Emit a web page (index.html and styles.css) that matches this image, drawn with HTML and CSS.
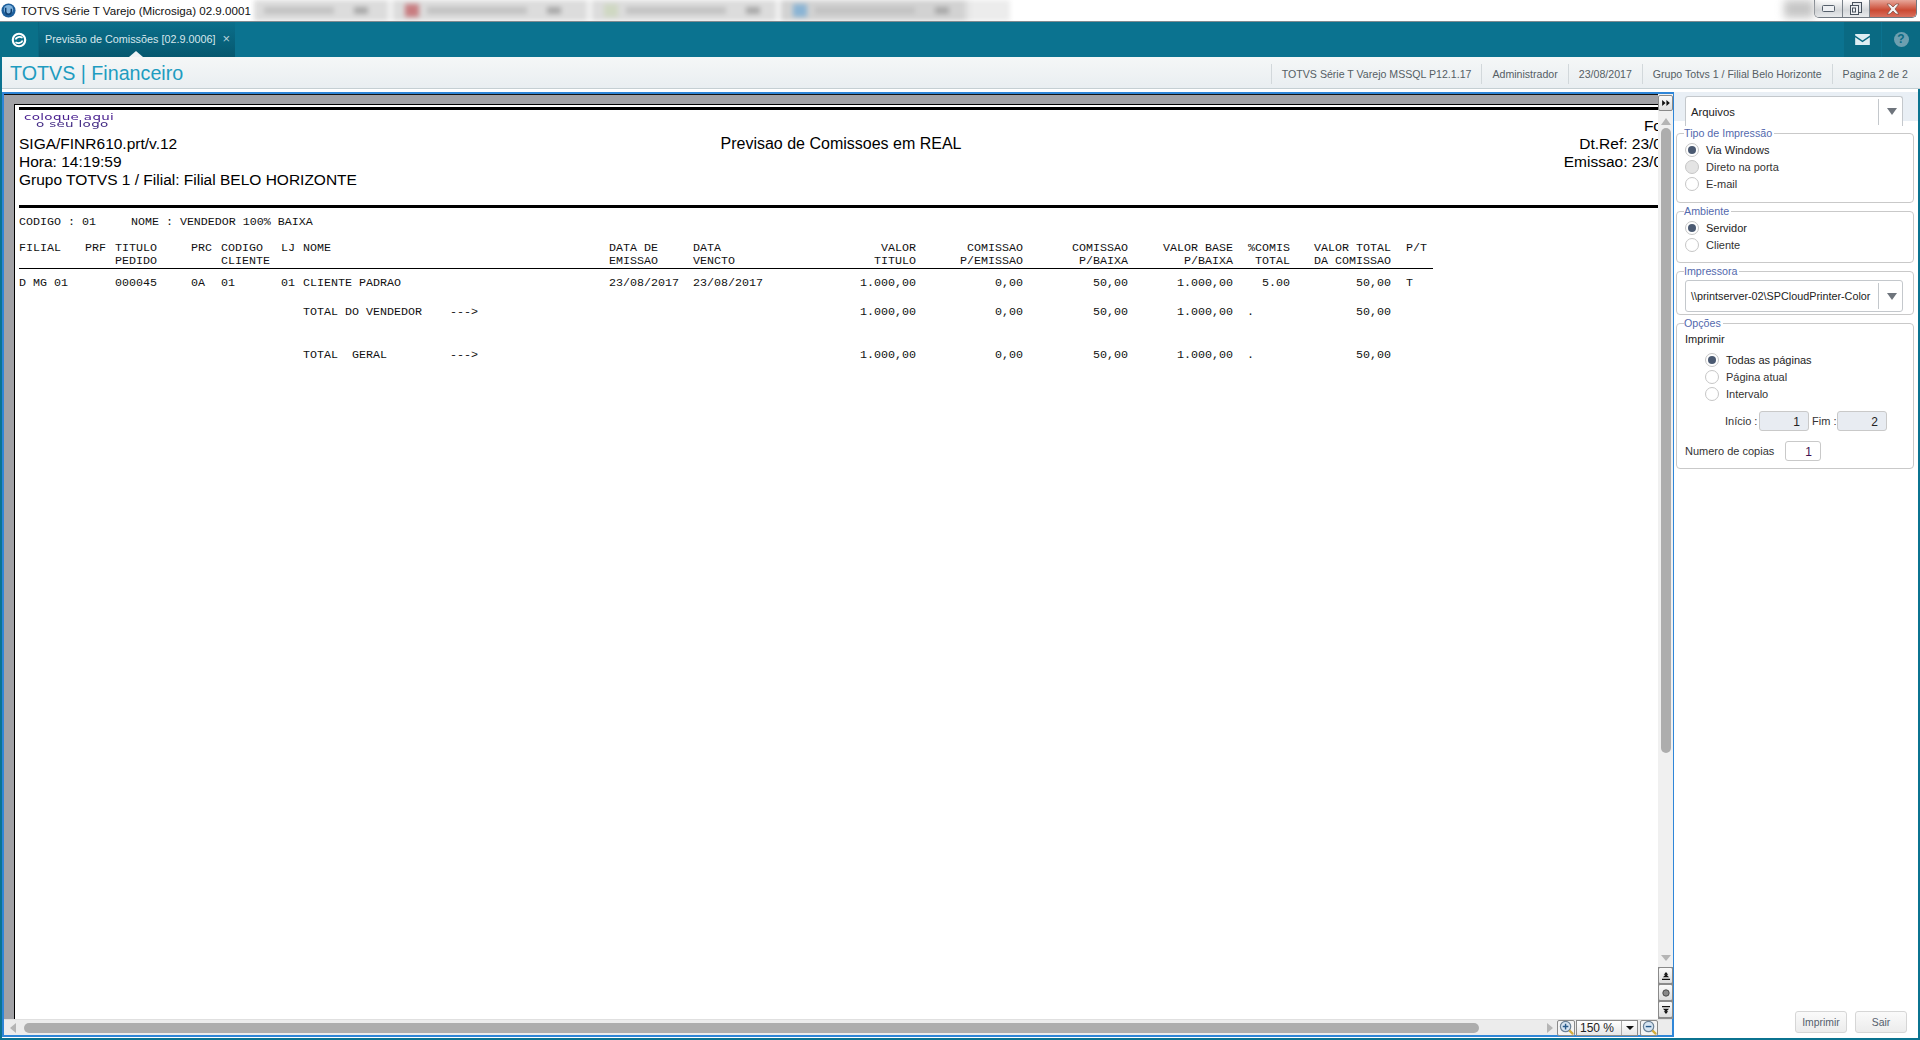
FILE: index.html
```html
<!DOCTYPE html>
<html lang="pt">
<head>
<meta charset="utf-8">
<title>TOTVS Série T Varejo</title>
<link rel="stylesheet" href="styles.css">
</head>
<body>
<div class="app">
  <header class="titlebar">
    <svg class="app-icon" viewBox="0 0 16 16" width="15" height="15"><circle cx="8" cy="8" r="7.5" fill="#1d5f9c"/><circle cx="8" cy="7" r="5" fill="#7fb2dc"/><path d="M5 5v4a3 3 0 0 0 6 0V6" fill="none" stroke="#0f3f70" stroke-width="1.6"/></svg>
    <span class="app-title">TOTVS Série T Varejo (Microsiga) 02.9.0001</span>
    <div class="blur-tabs">
      <div class="blur-tab t1"><i class="b1"></i><i class="b2"></i></div>
      <div class="blur-tab t2"><i class="sq red"></i><i class="b3"></i><i class="b2"></i></div>
      <div class="blur-tab t3"><i class="sq green"></i><i class="b3"></i><i class="b2"></i></div>
      <div class="blur-tab t4"><i class="sq blue"></i><i class="b3"></i><i class="b2"></i></div>
      <div class="blur-tab t5"></div>
    </div>
    <div class="blur-shadow"></div>
    <div class="win-controls">
      <div class="win-btn min"><svg viewBox="0 0 14 8" width="14" height="8"><rect x=".5" y=".5" width="12" height="6" rx="1" fill="#eef0f3" stroke="#56606c"/></svg></div>
      <div class="win-btn max"><svg viewBox="0 0 14 14" width="14" height="14"><rect x="3.5" y=".5" width="9" height="10" fill="#e3e6ea" stroke="#48525e"/><rect x="1.5" y="3.5" width="8" height="9" fill="#eef0f3" stroke="#48525e"/><rect x="3.5" y="6" width="3" height="4" fill="none" stroke="#48525e"/></svg></div>
      <div class="win-btn close"><svg viewBox="0 0 16 12" width="16" height="12"><path d="M2 1h3l3 3 3-3h3L10 6l4 5h-3L8 8l-3 3H2l4-5z" fill="#f4f4f4" stroke="#7a4a40" stroke-width=".7"/></svg></div>
    </div>
  </header>

  <nav class="navbar">
    <div class="nav-home">
      <svg viewBox="0 0 18 18" width="16" height="16"><circle cx="9" cy="9" r="7" fill="none" stroke="#fff" stroke-width="2.4"/><path d="M5 8.500C6 5.500 10 4.800 13 6.500" fill="none" stroke="#fff" stroke-width="2"/><path d="M13 9.500C12 12.500 8 13.200 5 11.500" fill="none" stroke="#fff" stroke-width="2"/></svg>
    </div>
    <div class="nav-tab">
      <span class="nav-tab-label">Previsão de Comissões [02.9.0006]</span>
      <span class="nav-tab-x">×</span>
    </div>
    <div class="nav-spacer"></div>
    <div class="nav-action">
      <svg viewBox="0 0 16 12" width="15" height="11"><path d="M0 1.500 8 7l8-5.500V0H0z" fill="#dfeef3"/><path d="M0 3.500V12h16V3.500L8 9z" fill="#dfeef3"/></svg>
    </div>
    <div class="nav-action">
      <div class="help">?</div>
    </div>
  </nav>

  <div class="context-bar">
    <div class="brand">TOTVS | Financeiro</div>
    <div class="context-items">
      <span class="ctx ctx1">TOTVS Série T Varejo MSSQL P12.1.17</span>
      <span class="ctx ctx2">Administrador</span>
      <span class="ctx ctx3">23/08/2017</span>
      <span class="ctx ctx4">Grupo Totvs 1 / Filial Belo Horizonte</span>
      <span class="ctx ctx5">Pagina 2 de 2</span>
    </div>
  </div>

  <main class="workspace">
    <section class="preview">
      <div class="preview-upper">
        <div class="page-well">
          <div class="page">
            <div class="page-rule"></div>
            <div class="logo"><span>coloque aqui</span><span class="logo-2">o seu logo</span></div>
            <div class="page-head">
              <div class="head-left">
                <div>SIGA/FINR610.prt/v.12</div>
                <div>Hora: 14:19:59</div>
                <div>Grupo TOTVS 1 / Filial: Filial BELO HORIZONTE</div>
              </div>
              <div class="head-center">Previsao de Comissoes em REAL</div>
              <div class="head-right">
                <div class="fo">Fo</div>
                <div>Dt.Ref: 23/0</div>
                <div>Emissao: 23/0</div>
              </div>
            </div>
            <div class="thick-rule"></div>
            <div class="seller">CODIGO : 01     NOME : VENDEDOR 100% BAIXA</div>
            <div class="report">
              <div class="row head">
                <span>FILIAL</span><span>PRF</span><span>TITULO<br>PEDIDO</span><span>PRC</span><span>CODIGO<br>CLIENTE</span><span>LJ</span><span>NOME</span><span>DATA DE<br>EMISSAO</span><span>DATA<br>VENCTO</span>
                <span class="r">VALOR<br>TITULO</span><span class="r">COMISSAO<br>P/EMISSAO</span><span class="r">COMISSAO<br>P/BAIXA</span><span class="r">VALOR BASE<br>P/BAIXA</span><span class="r">%COMIS<br>TOTAL</span><span class="r">VALOR TOTAL<br>DA COMISSAO</span><span class="pt">P/T</span>
              </div>
              <div class="row item">
                <span>D MG 01</span><span></span><span>000045</span><span>0A</span><span>01</span><span>01</span><span>CLIENTE PADRAO</span><span>23/08/2017</span><span>23/08/2017</span>
                <span class="r">1.000,00</span><span class="r">0,00</span><span class="r">50,00</span><span class="r">1.000,00</span><span class="r">5.00</span><span class="r">50,00</span><span class="pt">T</span>
              </div>
              <div class="row total t-seller">
                <span></span><span></span><span></span><span></span><span></span><span></span><span class="label">TOTAL DO VENDEDOR    ---&gt;</span><span></span><span></span>
                <span class="r">1.000,00</span><span class="r">0,00</span><span class="r">50,00</span><span class="r">1.000,00</span><span class="dot">.</span><span class="r">50,00</span><span class="pt"></span>
              </div>
              <div class="row total t-all">
                <span></span><span></span><span></span><span></span><span></span><span></span><span class="label">TOTAL  GERAL         ---&gt;</span><span></span><span></span>
                <span class="r">1.000,00</span><span class="r">0,00</span><span class="r">50,00</span><span class="r">1.000,00</span><span class="dot">.</span><span class="r">50,00</span><span class="pt"></span>
              </div>
            </div>
          </div>
        </div>
        <aside class="vtools">
          <button class="tool-btn top"><svg viewBox="0 0 9 7" width="8" height="6"><path d="M0 0l4 3.500L0 7zM5 0l4 3.500L5 7z" fill="#111"/></svg></button>
          <div class="vscroll">
            <div class="arrow-up"></div>
            <div class="vthumb"></div>
            <div class="arrow-down"></div>
          </div>
          <div class="tool-stack">
            <button class="tool-btn"><svg viewBox="0 0 9 9" width="8" height="8"><path d="M4.500 0l2.500 3H2zM4.500 2.500l3.500 3.500H1zM0 7.500h9v1.500H0z" fill="#111"/></svg></button>
            <button class="tool-btn"><svg viewBox="0 0 10 10" width="8" height="8"><circle cx="5" cy="5" r="4" fill="#888" stroke="#333"/></svg></button>
            <button class="tool-btn"><svg viewBox="0 0 9 9" width="8" height="8"><path d="M0 0h9v1.500H0zM4.500 9 2 6h5zM4.500 6.500 1 3h7z" fill="#111"/></svg></button>
          </div>
        </aside>
      </div>
      <div class="hbar">
        <div class="arrow-left"></div>
        <div class="hthumb"></div>
        <div class="arrow-right"></div>
        <button class="zoom-btn"><svg viewBox="0 0 16 16" width="15" height="15"><circle cx="7" cy="7" r="5.500" fill="#d7e5f2" stroke="#6c8297" stroke-width="1.300"/><path d="M4 7h6M7 4v6" stroke="#27598a" stroke-width="1.500"/><path d="M11 11l4 4" stroke="#d3ad3a" stroke-width="2.500"/></svg></button>
        <div class="zoom-combo"><span class="zoom-val">150 %</span><span class="zoom-caret"></span></div>
        <button class="zoom-btn"><svg viewBox="0 0 16 16" width="15" height="15"><circle cx="7" cy="7" r="5.500" fill="#d7e5f2" stroke="#6c8297" stroke-width="1.300"/><path d="M4 7h6" stroke="#27598a" stroke-width="1.500"/><path d="M11 11l4 4" stroke="#d3ad3a" stroke-width="2.500"/></svg></button>
      </div>
    </section>

    <aside class="side">
      <div class="side-top">
        <div class="combo open"><span class="combo-val">Arquivos</span><span class="combo-arrow"></span></div>
      </div>
      <div class="group g-tipo">
        <div class="legend">Tipo de Impressão</div>
        <div class="radios">
          <div class="radio-row on"><span class="radio"></span>Via Windows</div>
          <div class="radio-row off"><span class="radio"></span>Direto na porta</div>
          <div class="radio-row"><span class="radio"></span>E-mail</div>
        </div>
      </div>
      <div class="group g-amb">
        <div class="legend">Ambiente</div>
        <div class="radios">
          <div class="radio-row on"><span class="radio"></span>Servidor</div>
          <div class="radio-row"><span class="radio"></span>Cliente</div>
        </div>
      </div>
      <div class="group g-imp">
        <div class="legend">Impressora</div>
        <div class="combo"><span class="combo-val">\\printserver-02\SPCloudPrinter-Color</span><span class="combo-arrow"></span></div>
      </div>
      <div class="group g-opt">
        <div class="legend">Opções</div>
        <div class="imprimir">Imprimir</div>
        <div class="radios nested">
          <div class="radio-row on"><span class="radio"></span>Todas as páginas</div>
          <div class="radio-row"><span class="radio"></span>Página atual</div>
          <div class="radio-row"><span class="radio"></span>Intervalo</div>
        </div>
        <div class="range">
          <span class="range-lbl">Início :</span><span class="field dis f-a">1</span><span class="range-lbl2">Fim :</span><span class="field dis f-b">2</span>
        </div>
        <div class="copies"><span class="copies-lbl">Numero de copias</span><span class="field f-c">1</span></div>
      </div>
      <div class="side-actions">
        <button class="act">Imprimir</button>
        <button class="act">Sair</button>
      </div>
    </aside>
  </main>
</div>
</body>
</html>
```

FILE: styles.css
```css
* { box-sizing: border-box; }
html, body { margin: 0; padding: 0; }
body { width: 1920px; height: 1040px; overflow: hidden; font-family: "Liberation Sans", Arial, sans-serif; background: #0b7390; }
.app { width: 1920px; height: 1040px; display: flex; flex-direction: column; overflow: hidden; }

/* Window title bar */
.titlebar { height: 22px; flex: none; background: #fff; border-bottom: 1px solid #7f8a90; display: flex; align-items: flex-start; position: relative; overflow: hidden; }
.app-icon { margin: 3px 0 0 1px; flex: none; }
.app-title { margin: 3px 0 0 5px; font-size: 11.6px; line-height: 15px; color: #111; width: 230px; white-space: nowrap; flex: none; }
.blur-tabs { display: flex; height: 21px; margin-left: 3px; filter: blur(2.5px); flex: none; background: #dcdcdc; }
.blur-tab { height: 21px; display: flex; align-items: center; border-right: 5px solid #f4f4f4; padding-left: 12px; gap: 8px; }
.t1 { width: 139px; padding-left: 0; }
.t2 { width: 199px; }
.t3 { width: 189px; }
.t4 { width: 189px; background: #d2d2d2; border-right-color: #e2e2e2; }
.t5 { width: 40px; border: 0; background: #ececec; }
.blur-tab i { display: block; height: 7px; background: #c2c2c2; }
.b1 { width: 70px; margin-left: 10px; }
.b2 { width: 14px; margin-left: 12px; background: #a8a8a8 !important; }
.b3 { width: 100px; }
.sq { width: 14px; height: 13px !important; }
.red { background: #c87c80 !important; }
.green { background: #cfd8c2 !important; }
.blue { background: #8ab4d4 !important; }
.blur-shadow { margin-left: 774px; width: 30px; height: 18px; background: #c6c6c6; filter: blur(4px); flex: none; }
.win-controls { display: flex; height: 18px; border: 1px solid #6f7780; border-top: 0; border-radius: 0 0 5px 5px; overflow: hidden; flex: none; }
.win-btn { height: 17px; display: flex; align-items: center; justify-content: center; background: linear-gradient(#fdfdfd, #d4d7da 60%, #e8eaec); }
.min { width: 28px; border-right: 1px solid #7a828a; }
.max { width: 27px; border-right: 1px solid #7a828a; }
.close { width: 46px; background: linear-gradient(#e7a79a, #cb4a33 60%, #d9705f); }

/* Teal nav */
.navbar { height: 35px; flex: none; background: #0b7390; display: flex; }
.nav-home { width: 39px; display: flex; align-items: center; justify-content: center; border-right: 1px solid #0a6781; background: #0a7089; }
.nav-tab { width: 196px; background: linear-gradient(#0b6f8b, #06586f); display: flex; align-items: center; padding: 0 0 2px 6px; color: #d7e7ed; font-size: 10.8px; position: relative; }
.nav-tab::after { content: ""; position: absolute; left: 90px; bottom: 0; border: 7px solid transparent; border-top: 0; border-bottom: 6px solid #eef2f4; }
.nav-tab-label { white-space: nowrap; }
.nav-tab-x { margin-left: 7px; font-size: 13px; color: #b7d2da; }
.nav-spacer { flex: 1; }
.nav-action { width: 37px; margin-left: 1px; background: #0a6a83; display: flex; align-items: center; justify-content: center; }
.nav-action:last-child { width: 38px; }
.help { width: 15px; height: 15px; border-radius: 50%; background: #6d9fb0; color: #0a6a83; font-weight: 700; font-size: 12px; line-height: 15px; text-align: center; }

/* Context bar */
.context-bar { height: 32px; flex: none; margin-left: 2px; background: linear-gradient(#f5f7f7, #e9eef1); border-bottom: 1px solid #c5cfd3; display: flex; align-items: center; justify-content: space-between; padding: 2px 12px 0 8px; }
.brand { font-size: 19.7px; color: #1e9cc0; white-space: nowrap; }
.context-items { display: flex; height: 20px; align-items: center; }
.ctx { font-size: 10.6px; line-height: 20px; color: #555e64; border-left: 1px solid #d2d8db; padding: 0 10px; white-space: nowrap; }
.ctx5 { padding-right: 0; }

/* Workspace */
.workspace { flex: 1; display: flex; margin: 0 2px 2px; background: #fff; padding-top: 3px; min-height: 0; }
.preview { width: 1672px; height: 945px; flex: none; border: 2px solid #2f86d8; display: flex; flex-direction: column; background: #efefef; }
.preview-upper { flex: 1; display: flex; min-height: 0; }
.page-well { width: 1654px; flex: none; background: #a1a1a5; padding: 9px 0 0 10px; border-top: 1px solid #111; overflow: hidden; }
.page { height: 100%; background: #fff; border-left: 1px solid #000; border-top: 1px solid #000; padding: 2px 0 0 4px; overflow: hidden; }
.page-rule { height: 3px; background: #000; }
.logo { height: 15px; margin: 4px 0 0 5px; display: flex; flex-direction: column; align-items: flex-start; color: #4a2090; font: 13.5px/9px "DejaVu Sans", sans-serif; letter-spacing: .3px; }
.logo span { display: block; transform: scaleY(.7); transform-origin: 0 0; white-space: nowrap; height: 7px; }
.logo-2 { margin-left: 12px; color: #432b84; }
.page-head { display: flex; margin-top: 6px; height: 60px; font-size: 15.5px; line-height: 18px; color: #000; justify-content: space-between; margin-right: -4px; }
.head-left { white-space: nowrap; width: 340px; flex: none; }
.head-center { flex: none; width: 260px; text-align: center; font-size: 16px; margin-left: 352px; white-space: nowrap; }
.head-right { flex: 1; text-align: right; white-space: nowrap; margin-top: -18px; }
.fo { height: 18px; }
.thick-rule { height: 3px; background: #000; margin-top: 10px; }
.seller { font: 11.67px/14px "Liberation Mono", monospace; white-space: pre; color: #111; margin-top: 7px; }
.report { margin-top: 13px; width: 1414px; font: 11.67px/13px "Liberation Mono", monospace; color: #111; }
.row { display: grid; grid-template-columns: 66px 30px 76px 30px 60px 22px 306px 84px 130px 93px 107px 105px 105px 57px 101px 1fr; white-space: pre; }
.row.head { border-bottom: 1px solid #000; padding-bottom: 1px; height: 27px; }
.row.item { margin-top: 8px; }
.t-seller { margin-top: 16px; }
.t-all { margin-top: 30px; }
.r { text-align: right; }
.pt { padding-left: 15px; }
.dot { padding-left: 14px; }

/* Vertical tools */
.vtools { width: 15px; flex: none; display: flex; flex-direction: column; background: #f0f0f0; }
.tool-btn { width: 15px; height: 17px; padding: 0; border: 1px solid #8a8a8a; border-radius: 2px; background: linear-gradient(#fafafa, #dedede); display: flex; align-items: center; justify-content: center; }
.vtools > .tool-btn.top { height: 16px; margin-top: 1px; }
.vscroll { flex: 1; display: flex; flex-direction: column; align-items: center; min-height: 0; }
.arrow-up { margin-top: 7px; border: 5px solid transparent; border-top: 0; border-bottom: 7px solid #b5b5b5; }
.vthumb { width: 10px; height: 625px; margin-top: 3px; background: #adadad; border-radius: 5px; }
.arrow-down { margin-top: auto; margin-bottom: 6px; border: 5px solid transparent; border-bottom: 0; border-top: 6px solid #b5b5b5; }
.tool-stack { display: flex; flex-direction: column; background: #8d8d8d; padding-bottom: 1px; }

/* Horizontal bar */
.hbar { height: 16px; flex: none; display: flex; align-items: center; background: #ececec; border-top: 1px solid #e0e0e0; padding-left: 6px; }
.arrow-left { border: 5px solid transparent; border-left: 0; border-right: 6px solid #b5b5b5; flex: none; }
.hthumb { width: 1455px; height: 10px; margin-left: 8px; background: #adadad; border-radius: 5px; flex: none; }
.arrow-right { margin-left: 68px; border: 5px solid transparent; border-right: 0; border-left: 6px solid #b5b5b5; flex: none; }
.zoom-btn { width: 18px; height: 16px; padding: 0; margin-left: 4px; border: 1px solid #8a8a8a; border-radius: 2px; background: #f4f4f4; display: flex; align-items: center; justify-content: center; flex: none; }
.zoom-combo + .zoom-btn { margin-left: 2px; }
.zoom-combo { width: 62px; height: 16px; margin-left: 1px; flex: none; border: 1px solid #8a8a8a; background: linear-gradient(#fff, #e6e6e6); display: flex; align-items: center; font-size: 12px; color: #222; }
.zoom-val { width: 45px; padding-left: 3px; border-right: 1px solid #aaa; line-height: 14px; }
.zoom-caret { margin-left: 4px; border: 4px solid transparent; border-bottom: 0; border-top: 4px solid #111; }

/* Side panel */
.side { flex: 1; display: flex; flex-direction: column; min-width: 0; font-size: 11px; color: #333; }
.side-top { height: 29px; background: #e9eff5; padding: 4px 15px 0 11px; flex: none; }
.combo { height: 32px; border: 1px solid #c4c8cc; border-radius: 3px; background: #fff; display: flex; align-items: center; justify-content: space-between; color: #222; font-size: 10.8px; padding-left: 5px; }
.combo.open { height: 30px; border-bottom: 0; border-radius: 3px 3px 0 0; position: relative; z-index: 1; font-size: 11.3px; }
.combo-val { white-space: nowrap; }
.combo-arrow { width: 24px; height: 26px; border-left: 1px solid #c4c8cc; padding-left: 3px; display: flex; align-items: center; justify-content: center; flex: none; }
.combo-arrow::after { content: ""; border: 5px solid transparent; border-bottom: 0; border-top: 7px solid #6e747c; }
.group { margin: 0 4px 0 2px; border: 1px solid #c9c9c9; border-radius: 4px; background: #fff; }
.legend { width: fit-content; margin: -7px 0 0 7px; padding: 0 2px 0 0; height: 13px; line-height: 13px; font-size: 10.7px; color: #5369ad; background: #fff; position: relative; z-index: 2; }
.g-tipo { margin-top: 12px; height: 70px; }
.g-amb { margin-top: 8px; height: 52px; }
.g-imp { margin-top: 8px; height: 44px; }
.g-opt { margin-top: 8px; height: 146px; }
.radios { padding: 1.5px 0 0 8px; }
.radio-row { display: flex; align-items: center; height: 17px; white-space: nowrap; gap: 7px; color: #333; }
.radio { width: 14px; height: 14px; border-radius: 50%; border: 1px solid #c6c6c6; background: #fff; display: flex; align-items: center; justify-content: center; flex: none; }
.radio-row.on { color: #222; }
.radio-row.on .radio::after { content: ""; width: 8px; height: 8px; border-radius: 50%; background: #4b5a72; }
.radio-row.off .radio { background: #e4e4e4; }
.g-imp .combo { margin: 2px 10px 0 8px; }
.imprimir { margin: 2px 0 0 8px; line-height: 14px; color: #222; }
.radios.nested { padding: 5.5px 0 0 28px; }
.range { display: flex; align-items: center; height: 20px; margin-top: 8.5px; padding-left: 48px; }
.range-lbl { width: 34px; white-space: nowrap; flex: none; }
.range-lbl2 { width: 28px; padding-left: 3px; white-space: nowrap; flex: none; }
.field { height: 20px; border: 1px solid #c9c9c9; border-radius: 3px; text-align: right; padding-right: 8px; line-height: 20px; font-size: 12px; color: #222; flex: none; }
.field.dis { background: #e8ecf2; }
.f-a { width: 50px; }
.f-b { width: 50px; }
.f-c { width: 36px; color: #401050; }
.copies { display: flex; align-items: center; height: 20px; margin: 9.5px 0 0 8px; }
.copies-lbl { width: 100px; white-space: nowrap; }
.side-actions { margin-top: auto; display: flex; gap: 8px; justify-content: flex-end; padding: 0 11px 5px 0; }
.act { width: 52px; height: 22px; border: 1px solid #d6d6d6; border-radius: 3px; background: linear-gradient(#fafafa, #ececec); color: #55606c; font: 10.4px "Liberation Sans", sans-serif; padding: 0; }
```
